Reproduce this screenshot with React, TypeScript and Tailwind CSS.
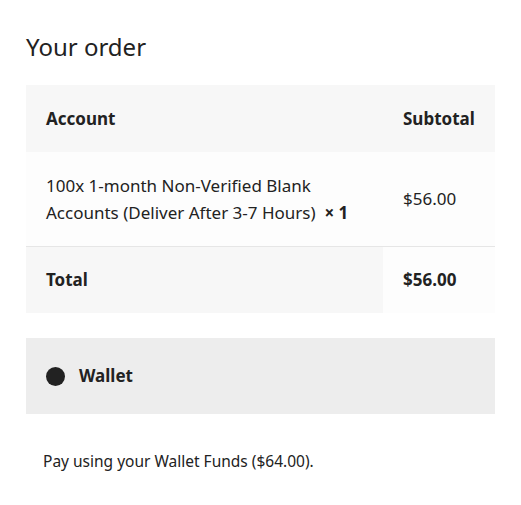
export default function App() {
  return (
    <div className="min-h-[505px] bg-white px-[26px] pt-[30px] text-[#222] font-['Noto_Sans',sans-serif]">
      <h3 className="text-[24px] leading-[34px] font-normal">Your order</h3>

      <table className="mt-[21px] w-full border-collapse text-[17px]">
        <thead>
          <tr className="bg-[#f7f7f7]">
            <th className="h-[67px] px-5 text-left font-bold">Account</th>
            <th className="h-[67px] w-[112px] px-5 text-left font-bold">Subtotal</th>
          </tr>
        </thead>
        <tbody>
          <tr className="bg-[#fdfdfd]">
            <td className="h-[94px] px-5 leading-[27px]">
              100x 1-month Non-Verified Blank Accounts (Deliver After 3-7 Hours)&nbsp;&nbsp;<strong>× 1</strong>
            </td>
            <td className="px-5">$56.00</td>
          </tr>
        </tbody>
        <tfoot>
          <tr className="border-t border-[#e6e6e6]">
            <th className="h-[67px] bg-[#f7f7f7] px-5 text-left font-bold">Total</th>
            <td className="bg-[#fdfdfd] px-5 font-bold">$56.00</td>
          </tr>
        </tfoot>
      </table>

      <div className="mt-[25px] flex h-[76px] items-center bg-[#ededed] px-5">
        <span className="h-[19px] w-[19px] rounded-full bg-[#222]" />
        <span className="ml-[14px] text-[17px] font-bold">Wallet</span>
      </div>

      <p className="mt-[35px] px-[17px] text-[15.5px] leading-[24px]">Pay using your Wallet Funds ($64.00).</p>
    </div>
  );
}
